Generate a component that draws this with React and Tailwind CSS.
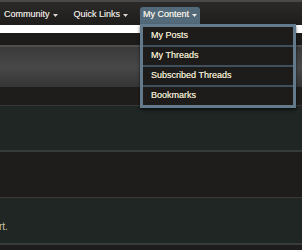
const navItems = ["Community", "Quick Links"];

const menuItems = ["My Posts", "My Threads", "Subscribed Threads", "Bookmarks"];

const Caret = () => (
    <svg width="5" height="3" viewBox="0 0 5 3" className="ml-[3px] mt-[1px]">
        <path d="M0 0 L5 0 L2.5 3 Z" fill="currentColor" />
    </svg>
);

const App = () => {
    return (
        <div
            className="w-[302px] h-[250px] overflow-hidden bg-[#1f1d1b] text-[9px]"
            style={{ fontFamily: '"Liberation Sans", Arial, sans-serif' }}
        >
            {/* top nav */}
            <div className="h-[25px] border-t-2 border-[#4a4a4a] bg-gradient-to-b from-[#2c2a28] to-[#1f1d1c] flex items-end pl-[4px]">
                {navItems.map((item) => (
                    <div
                        key={item}
                        className="h-[18px] pb-[2px] flex items-center mr-[16px] text-[#dcdad2] [text-shadow:0_0_0.4px_#dcdad2]"
                    >
                        {item}
                        <Caret />
                    </div>
                ))}
                <div className="relative -ml-[4px]">
                    <div className="h-[18px] pb-[2px] flex items-center pl-[3px] pr-[3px] rounded-t-[3px] bg-[#536a7b] text-[#eeeae0] [text-shadow:0_0_0.4px_#eeeae0]">
                        My Content
                        <Caret />
                    </div>
                    <div className="absolute left-0 top-[17px] w-[156px] z-10 border-[3px] border-[#627a8c] bg-[#1e1c1b] shadow-[0_2px_3px_rgba(0,0,0,0.6)]">
                        {menuItems.map((item, i) => (
                            <div
                                key={item}
                                className={
                                    "flex items-center pl-[8px] text-[#e6e0c8] [text-shadow:0_0_0.4px_#e6e0c8] " +
                                    (i < menuItems.length - 1
                                        ? "h-[20px] border-b-2 border-[#3f4f5b]"
                                        : "h-[18px]")
                                }
                            >
                                {item}
                            </div>
                        ))}
                    </div>
                </div>
            </div>

            {/* search strip */}
            <div className="h-[8px] bg-white" />
            <div className="h-[14px] bg-[#1c1b1a] border-b-2 border-[#4e4e4e]" />

            {/* header bar */}
            <div className="h-[40px] bg-gradient-to-b from-[#3a3a3a] via-[#484848] to-[#353535]" />

            {/* rows */}
            <div className="h-[19px] bg-[#1f1d1b] border-b border-[#3a3836]" />
            <div className="h-[46px] bg-[#1f2624] border-b-2 border-[#363c3a]" />
            <div className="h-[46px] bg-[#1f1d1b] border-b border-[#3a3a38]" />
            <div className="h-[47px] bg-[#1f2624] border-b-2 border-[#363c3a] flex items-center">
                <p className="-ml-[1px] pt-[12px] text-[10px] text-[#c8c0a8]">rt.</p>
            </div>
            <div className="h-[10px] bg-[#1f1d1b]" />
        </div>
    );
};

export default App;
